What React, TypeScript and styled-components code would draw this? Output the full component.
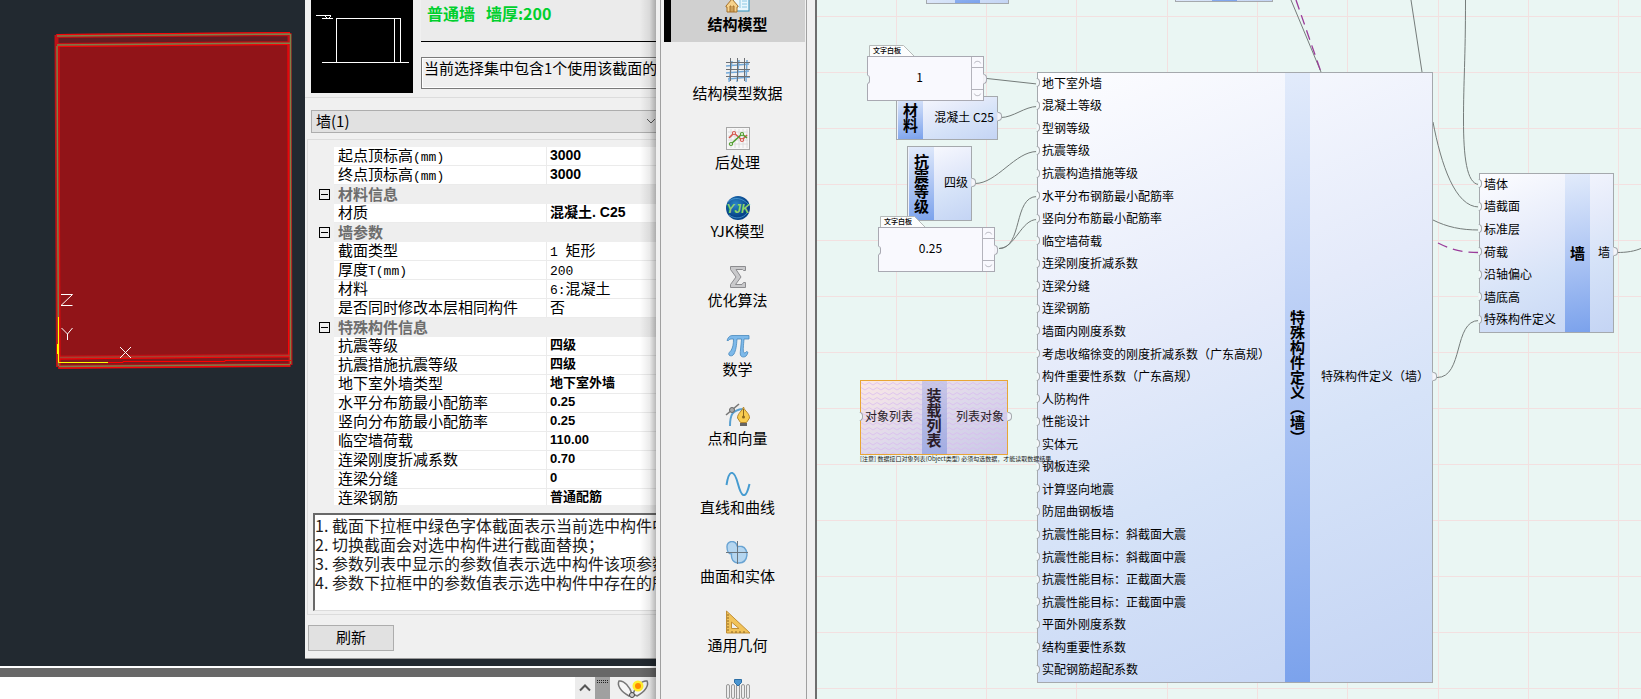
import React from "react";
import styled, { createGlobalStyle, css } from "styled-components";

const sans = '"Noto Sans CJK SC", "Noto Sans", sans-serif';
const latinBold = '"Liberation Sans", "Noto Sans CJK SC", sans-serif';

const GlobalStyle = createGlobalStyle`
  *, *::before, *::after { box-sizing: border-box; }
  html, body { margin: 0; padding: 0; }
  body { font-family: ${sans}; font-size: 15px; color: #000; background: #f0f0f0; overflow: hidden; }
  button, input, select, textarea { font: inherit; color: inherit; margin: 0; border-radius: 0; }
`;

const Page = styled.main`
  display: grid;
  grid-template-columns: minmax(0, 656fr) 161px minmax(0, 824fr);
  height: 100vh;
`;

/* ---------- CAD window ---------- */

const CadWindow = styled.section`
  position: relative;
  display: flex;
  flex-direction: column;
  min-height: 0;
  overflow: hidden;
  background: #222930;
  &::after {
    content: "";
    position: absolute;
    top: 0;
    right: 0;
    bottom: 0;
    width: 16px;
    pointer-events: none;
    background: linear-gradient(to right, rgba(0, 0, 0, 0), rgba(0, 0, 0, 0.08) 60%, rgba(0, 0, 0, 0.28));
  }
`;

const CadBody = styled.div`
  flex: 1;
  display: flex;
  min-height: 0;
`;

const Viewport = styled.div`
  flex: 1;
  min-width: 0;
  overflow: hidden;
  svg { display: block; }
`;

const Dialog = styled.aside`
  flex: none;
  width: 351px;
  align-self: flex-start;
  overflow: hidden;
  padding-bottom: 7px;
  background: #f0f0f0;
  border-bottom: 1px solid #9a9a9a;
  white-space: nowrap;
`;

const SectionInfo = styled.div`
  display: flex;
  gap: 8px;
  height: 98px;
  padding-left: 6px;
  border-bottom: 1px solid #dcdcdc;
`;

const Preview = styled.svg`
  flex: none;
  display: block;
  background: #000;
`;

const InfoColumn = styled.div`
  flex: 1;
  min-width: 0;
`;

const SectionName = styled.div`
  height: 42px;
  padding-left: 6px;
  border-bottom: 1px solid #000;
  background: #ebebeb;
  color: #00d02e;
  font-size: 16px;
  font-weight: 700;
  line-height: 26px;
`;

const SelectionNote = styled.input`
  display: block;
  width: 260px;
  height: 32px;
  margin-top: 15px;
  padding: 0 2px 12px;
  border: 1px solid #7a7a7a;
  outline: 1px solid #fff;
  outline-offset: -2px;
  background: #f0f0f0;
`;

const ComboBox = styled.div`
  position: relative;
  margin: 12px 0 6px 6px;
  height: 23px;
  border: 1px solid #adadad;
  border-right: 0;
  background: #e1e1e1;
  select {
    display: block;
    width: 100%;
    height: 21px;
    padding: 0 4px 2px;
    border: 0;
    appearance: none;
    background: transparent;
    line-height: 19px;
  }
  svg {
    position: absolute;
    top: 7px;
    right: 0;
    pointer-events: none;
  }
`;

const GroupBox = styled.div`
  margin-left: 2px;
  padding: 7px 0 3px;
  border: 1px solid #dcdcdc;
  border-right: 0;
`;

const GridClip = styled.div`
  height: 358px;
  overflow: hidden;
`;

const PropertyTable = styled.table`
  width: 100%;
  table-layout: fixed;
  border-collapse: separate;
  border-spacing: 0;
  line-height: 16px;
  th, td {
    height: 19px;
    padding: 0 0 2px;
    text-align: left;
    font-weight: 400;
  }
`;

const GutterCol = styled.col`
  width: 26px;
`;

const NameCol = styled.col`
  width: 213px;
`;

const GutterCell = styled.td`
  && { padding: 0; }
  line-height: 1px;
  vertical-align: middle;
`;

const NameCell = styled.th`
  && { padding-left: 4px; }
  background: #fff;
  border-right: 1px solid #ebebeb;
  border-bottom: 1px solid #ebebeb;
`;

const ValueCell = styled.td<{ $tone?: "large" | "bold" }>`
  && {
    padding-left: 3px;
    ${(p) => p.$tone && css`
      font-family: ${latinBold};
      font-weight: 700;
      font-size: ${p.$tone === "large" ? 14 : 13}px;
    `}
  }
  background: #fff;
  border-bottom: 1px solid #ebebeb;
`;

const CategoryCell = styled.th`
  && { padding-left: 4px; font-weight: 700; }
  background: #eee;
  color: #6d6d6d;
`;

const Mono = styled.span`
  font-family: "Liberation Mono", monospace;
  font-size: 13px;
  line-height: 1px;
`;

const CollapseButton = styled.button`
  position: relative;
  display: block;
  width: 11px;
  height: 11px;
  margin-left: 11px;
  padding: 0;
  border: 1px solid #000;
  background: #f0f0f0;
  &::after {
    content: "";
    position: absolute;
    inset: 4px 1px;
    background: #000;
  }
`;

const Notes = styled.textarea`
  display: block;
  width: calc(100% - 5px);
  height: 98px;
  margin: 8px 0 0 5px;
  padding: 1px 0 0;
  border: solid #696969;
  border-width: 2px 0 1px 2px;
  border-bottom-color: #dcdcdc;
  resize: none;
  overflow: hidden;
  white-space: pre;
  background: #fff;
  color: #1c1c1c;
  font-size: 16px;
  line-height: 19px;
`;

const RefreshButton = styled.button`
  display: block;
  width: 86px;
  height: 26px;
  margin: 10px 0 0 3px;
  padding: 0 0 2px;
  border: 1px solid #adadad;
  background: #e1e1e1;
  line-height: 22px;
`;

const CommandBar = styled.footer`
  flex: none;
  display: flex;
  justify-content: flex-end;
  height: 33px;
  border-top: 2px solid #fff;
  background: linear-gradient(#686868 0 9px, #fff 9px);
  padding-top: 9px;
`;

const HistoryButton = styled.button`
  width: 20px;
  padding: 0;
  border: 0;
  background: #ececec;
  line-height: 1px;
`;

const Grip = styled.div`
  width: 15px;
  background: #a0a0a0;
  svg { display: block; }
`;

const CommandTools = styled.div`
  width: 46px;
  background: #f0f0f0;
`;

/* ---------- Category sidebar ---------- */

const Sidebar = styled.nav`
  display: flex;
  min-height: 0;
  overflow: hidden;
  padding: 0 8px 0 4px;
  border-right: 2px solid #6e6e6e;
  background: #f0f0f0;
`;

const CategoryList = styled.ul`
  flex: 1;
  align-self: flex-start;
  min-height: 120vh;
  margin: -27px 0 0;
  padding: 0 1px 0 3px;
  border: solid #a0a0a0;
  border-width: 0 1px;
  list-style: none;
`;

const CategoryButton = styled.button<{ $active?: boolean }>`
  display: flex;
  flex-direction: column;
  align-items: center;
  width: 100%;
  height: 69px;
  padding: 16px 2px 0 8px;
  border: 0;
  background: #f0f0f0;
  line-height: 22px;
  ${(p) => p.$active && css`
    background: #d0d0d0;
    box-shadow: inset 7px 0 #000;
    font-weight: 700;
  `}
  svg { flex: none; display: block; }
`;

/* ---------- Node canvas ---------- */

const Canvas = styled.section`
  position: relative;
  min-width: 0;
  overflow: hidden;
  background: #eaf6f3;
  font-size: 12px;
  line-height: 16px;
  white-space: nowrap;
`;

const Layer = styled.svg`
  position: absolute;
  inset: 0;
  width: 100%;
  height: 100%;
`;

interface Box { $x: number; $y: number; $w: number; $h: number }

const NodeCard = styled.article<Box & { $warn?: boolean }>`
  position: absolute;
  left: ${(p) => p.$x}px;
  top: ${(p) => p.$y}px;
  width: ${(p) => p.$w}px;
  height: ${(p) => p.$h}px;
  display: flex;
  border: 1px solid #a5a9ad;
  background: linear-gradient(158deg, #fdfdff, #e4eafa 42%, #d6e3f8 62%, #c4d4f4);
  ${(p) => p.$warn && css`
    border-color: #e8a535;
    background: linear-gradient(150deg, #fbe8e6, #ddd8ea 50%, #c9c8e6);
    color: #2a1c28;
  `}
`;

const Strip = styled.h3<{ $warn?: boolean }>`
  position: relative;
  flex: none;
  display: flex;
  align-items: center;
  justify-content: center;
  width: 25px;
  margin: 0;
  writing-mode: vertical-rl;
  font-size: 15px;
  line-height: 25px;
  font-weight: 700;
  background: ${(p) => (p.$warn ? "linear-gradient(rgba(190,190,230,.7), rgba(150,165,225,.8))" : "linear-gradient(170deg, #e2ebfb, #b0c7f4 50%, #7ba2ec)")};
  &:first-child {
    width: 26px;
    border-left: 1px solid #eef2fb;
  }
`;

const PortColumn = styled.div<{ $grow?: boolean }>`
  position: relative;
  display: flex;
  flex-direction: column;
  min-width: 0;
  ${(p) => p.$grow && "flex: 1;"}
`;

const OutputSlot = styled(PortColumn)<{ $w: number }>`
  flex: none;
  width: ${(p) => p.$w}px;
`;

const InPort = styled.div`
  position: relative;
  flex: 1;
  display: flex;
  align-items: center;
  padding: 0 0 3px 4px;
  &::before {
    content: "";
    position: absolute;
    left: -2px;
    width: 4px;
    height: 9px;
    border: 1px solid #a5a9ad;
    border-left-color: #eaf6f3;
    border-radius: 0 4px 4px 0;
    background: #f4f8fa;
  }
`;

const OutPort = styled.div`
  position: relative;
  flex: 1;
  display: flex;
  align-items: center;
  justify-content: flex-end;
  padding: 0 3px 3px 0;
  &::after {
    content: "";
    position: absolute;
    right: -5px;
    width: 5px;
    height: 9px;
    border: 1px solid #a5a9ad;
    border-left-color: #e8e8ee;
    border-radius: 0 4px 4px 0;
    background: #f4f5fa;
  }
`;

const BoardWrap = styled.label<{ $x: number; $y: number }>`
  position: absolute;
  left: ${(p) => p.$x}px;
  top: ${(p) => p.$y}px;
  width: 117px;
`;

const BoardTab = styled.span`
  position: relative;
  display: block;
  width: 46px;
  height: 11px;
  margin-left: 2px;
  padding-left: 4px;
  font-size: 7px;
  line-height: 11px;
  svg { position: absolute; left: 0; top: 0; }
  b { position: relative; font-weight: 500; }
`;

const BoardBody = styled.span`
  position: relative;
  display: flex;
  height: 45px;
  border: 1px solid #a9a9b2;
  background: #f9f9fe;
  &::before {
    content: "";
    position: absolute;
    left: -1px;
    top: 18px;
    width: 3px;
    height: 9px;
    border: 1px solid #a9a9b2;
    border-left-color: #eaf6f3;
    border-radius: 0 3px 3px 0;
    background: #eaf6f3;
  }
  &::after {
    content: "";
    position: absolute;
    right: -4px;
    top: 17px;
    width: 4px;
    height: 10px;
    border: 1px solid #a9a9b2;
    border-left-color: #f0f0f4;
    border-radius: 0 4px 4px 0;
    background: #f4f5fa;
  }
  input {
    flex: 1;
    min-width: 0;
    padding: 0 0 4px;
    border: 0;
    background: transparent;
    text-align: center;
  }
`;

const Scroller = styled.span`
  display: flex;
  flex-direction: column;
  justify-content: space-between;
  width: 12px;
  border-left: 1px solid #b4b4bc;
  svg { display: block; border: solid #b4b4bc; border-width: 0 0 1px; }
  svg:last-child { border-width: 1px 0 0; }
`;

const Remark = styled.p`
  position: absolute;
  left: 43px;
  top: 454px;
  margin: 0;
  font-size: 6px;
  line-height: 9px;
  color: #222;
`;

/* ---------- Data ---------- */

type Row = { category: string } | { name: string; value: string; tone?: "large" | "bold" };

const rows: Row[] = [
  { name: "起点顶标高(mm)", value: "3000", tone: "large" },
  { name: "终点顶标高(mm)", value: "3000", tone: "large" },
  { category: "材料信息" },
  { name: "材质", value: "混凝土. C25", tone: "large" },
  { category: "墙参数" },
  { name: "截面类型", value: "1 矩形" },
  { name: "厚度T(mm)", value: "200" },
  { name: "材料", value: "6:混凝土" },
  { name: "是否同时修改本层相同构件", value: "否" },
  { category: "特殊构件信息" },
  { name: "抗震等级", value: "四级", tone: "bold" },
  { name: "抗震措施抗震等级", value: "四级", tone: "bold" },
  { name: "地下室外墙类型", value: "地下室外墙", tone: "bold" },
  { name: "水平分布筋最小配筋率", value: "0.25", tone: "bold" },
  { name: "竖向分布筋最小配筋率", value: "0.25", tone: "bold" },
  { name: "临空墙荷载", value: "110.00", tone: "bold" },
  { name: "连梁刚度折减系数", value: "0.70", tone: "bold" },
  { name: "连梁分缝", value: "0", tone: "bold" },
  { name: "连梁钢筋", value: "普通配筋", tone: "bold" },
];

const notes = [
  "1. 截面下拉框中绿色字体截面表示当前选中构件中",
  "2. 切换截面会对选中构件进行截面替换；",
  "3. 参数列表中显示的参数值表示选中构件该项参数",
  "4. 参数下拉框中的参数值表示选中构件中存在的所",
].join("\n");

const specialInputs = [
  "地下室外墙", "混凝土等级", "型钢等级", "抗震等级", "抗震构造措施等级",
  "水平分布钢筋最小配筋率", "竖向分布筋最小配筋率", "临空墙荷载", "连梁刚度折减系数",
  "连梁分缝", "连梁钢筋", "墙面内刚度系数", "考虑收缩徐变的刚度折减系数（广东高规）",
  "构件重要性系数（广东高规）", "人防构件", "性能设计", "实体元", "钢板连梁",
  "计算竖向地震", "防屈曲钢板墙", "抗震性能目标：斜截面大震", "抗震性能目标：斜截面中震",
  "抗震性能目标：正截面大震", "抗震性能目标：正截面中震", "平面外刚度系数",
  "结构重要性系数", "实配钢筋超配系数",
];

const wallInputs = ["墙体", "墙截面", "标准层", "荷载", "沿轴偏心", "墙底高", "特殊构件定义"];

/* ---------- Icons ---------- */

const Icon = ({ children }: { children: React.ReactNode }) => (
  <svg width="26" height="24" viewBox="0 0 26 24" aria-hidden="true">{children}</svg>
);

const HouseIcon = () => (
  <Icon>
    <rect x="8" y="3" width="16" height="19" fill="#e9f7fd" stroke="#2d8fbd" />
    <path d="M10 10h5v9M17 12h5M17 15h5M17 18h5" stroke="#8cc8e4" fill="none" />
    <path d="M1 17 7 10l6 7v1h-1v5H2v-5H1z" fill="#f6d28b" stroke="#a5702a" />
    <path d="M5 23v-6h1v6M8 23v-6h1v6" stroke="#a5702a" fill="none" />
  </Icon>
);

const MeshIcon = () => (
  <Icon>
    <path d="M7 3 4 24M14 2l-2 22M22 2l-1 22M1 8l23-2M1 15l23-2M3 21l22-2" stroke="#74a9d8" strokeWidth="1.500" fill="none" />
    <path d="M5.500 0v23M12.500 0v23M19.500 0v23M1 4.500h24M1 11.500h24M1 18.500h24" stroke="#6b6f74" fill="none" />
  </Icon>
);

const ChartIcon = () => (
  <Icon>
    <rect x="1.500" y=".5" width="23" height="22" fill="#f7f7f7" stroke="#a6a6a6" />
    <path d="M6 2v19M10 2v19M14 2v19M18 2v19M22 2v19M3 5h20M3 9h20M3 13h20M3 17h20" stroke="#dcdcdc" />
    <path d="M4 11 9 6l8 7 5-5" stroke="#d4574e" strokeWidth="1.600" fill="none" />
    <path d="m6 17 11-10 5 4" stroke="#4f9c2d" strokeWidth="1.600" fill="none" />
    <g fill="#fff" strokeWidth="1.200"><circle cx="9" cy="6" r="1.500" stroke="#d4574e" /><circle cx="17" cy="13" r="1.500" stroke="#d4574e" /><circle cx="6" cy="17" r="1.500" stroke="#4f9c2d" /><circle cx="17" cy="7" r="1.500" stroke="#4f9c2d" /></g>
  </Icon>
);

const YjkIcon = () => (
  <Icon>
    <defs><radialGradient id="globe" cx=".4" cy=".35"><stop offset="0" stopColor="#2b86c8" /><stop offset="1" stopColor="#07448a" /></radialGradient></defs>
    <circle cx="13" cy="12" r="12" fill="url(#globe)" />
    <path d="M3 6c6-6 15-4 21 3M4 19c7 5 14 3 18-2" stroke="#5fb0e2" fill="none" opacity=".6" />
    <text x="13" y="17" textAnchor="middle" fontFamily="Liberation Sans" fontStyle="italic" fontWeight="700" fontSize="12" fill="#8fd36a">YJK</text>
  </Icon>
);

const SigmaIcon = () => (
  <Icon>
    <path d="M5.500 1.500h15v4h-2l-1-1H11l5 7.500-5.500 7.500H17l1.500-2h2v5h-15v-3L11 12 5.500 4.500z" fill="#c9c9cb" stroke="#8c8c8f" />
  </Icon>
);

const PiIcon = () => (
  <Icon>
    <path d="M2 6.500C3.500 2.500 5 1.500 8 1.500h16v3.500h-5c-.5 6-1 11-.5 13 .5 1.500 2 1 3-.5l1.500.8c-1 3.500-2.500 4.700-4.500 4.700-3.500 0-3.500-3-3-7l1-11h-4.500c-.5 7-1 11-3 15-1 2-4 2.500-5 1-1-2 1-3 2-4.500 2-3 2.500-7 2.500-11.500-3 0-4 0-5 1.500z" fill="#7db9ea" stroke="#4688bd" strokeWidth=".8" />
  </Icon>
);

const PenIcon = () => (
  <Icon>
    <path d="M5 23c0-11 2-16 13-17" stroke="#5aa0d0" strokeWidth="2" fill="none" />
    <path d="m1 12 13-11" stroke="#777" strokeWidth="1.600" />
    <circle cx="7" cy="7" r="2.500" fill="#aaa" stroke="#666" />
    <path d="M18.500 4c1 4 6 6 6 11l-3 4.500h-6l-3-4.500c0-5 5-7 6-11z" fill="#f8cc50" stroke="#b5862b" />
    <path d="M18.500 6v8" stroke="#8b671f" /><circle cx="18.500" cy="14" r="1.500" fill="#8b671f" />
    <path d="M15 20h7v3h-7z" fill="#646464" />
  </Icon>
);

const SineIcon = () => (
  <Icon><path d="M1.500 13C4-3 9-3 13 12s8 15 11.500 0" stroke="#459bd0" strokeWidth="2" fill="none" /></Icon>
);

const SolidIcon = () => (
  <Icon>
    <path d="M2 6a5 5 0 0 1 10-1c1 1 3 0 5 .5 7 2 7 16-3 16.500-6 0-8-4-7.500-9C4 13 2 11 2 6z" fill="#b5d6f0" stroke="#69a3d2" strokeWidth="1.400" />
    <path d="M12.500 0v23M1 11.500h22" stroke="#6a7680" />
  </Icon>
);

const TriangleIcon = () => (
  <Icon>
    <path d="M1.500 1v22H25zM6.500 12v6.500H14z" fill="#f1c35a" stroke="#c28f35" fillRule="evenodd" />
    <path d="M2 5h2M2 8h2M2 11h2M2 14h2M2 17h2M2 20h2M7 23v-2M11 23v-2M15 23v-2M19 23v-2" stroke="#8e6925" />
  </Icon>
);

const SliceIcon = () => (
  <Icon>
    <g fill="#ececec" stroke="#9a9a9a"><rect x="1.500" y="5.500" width="3" height="14" rx="1.500" /><rect x="6.500" y="5.500" width="3" height="14" rx="1.500" /><rect x="16.500" y="5.500" width="3" height="14" rx="1.500" /><rect x="21.500" y="5.500" width="3" height="14" rx="1.500" /></g>
    <rect x="11.500" y="5" width="3" height="15" fill="#ececec" stroke="#9a9a9a" />
    <path d="M9.500 .5h7v3L13 7 9.500 3.500z" fill="#4a95d0" stroke="#2c6fa6" />
  </Icon>
);

const categories = [
  { label: "结构模型", icon: <HouseIcon /> },
  { label: "结构模型数据", icon: <MeshIcon /> },
  { label: "后处理", icon: <ChartIcon /> },
  { label: "YJK模型", icon: <YjkIcon /> },
  { label: "优化算法", icon: <SigmaIcon /> },
  { label: "数学", icon: <PiIcon /> },
  { label: "点和向量", icon: <PenIcon /> },
  { label: "直线和曲线", icon: <SineIcon /> },
  { label: "曲面和实体", icon: <SolidIcon /> },
  { label: "通用几何", icon: <TriangleIcon /> },
  { label: "", icon: <SliceIcon /> },
];

/* ---------- Parts ---------- */

/* Latin runs use a narrower monospaced face than the Chinese text round them. */
const Mixed = ({ text }: { text: string }) => (
  <>
    {text.split(/([\x20-\x7e]+)/).map((run, i) =>
      i % 2 ? <Mono key={i}>{run}</Mono> : run
    )}
  </>
);

const WallView = () => (
  <svg width="305" height="390" viewBox="0 0 305 390" fill="none" role="img" aria-label="3D">
    <path d="M57 36 290 34l1 331-232 2z" fill="#911418" />
    <path d="M57 36 290 33v10L57 46z" fill="#621c22" />
    <path d="M60 360 290 357v8L60 367z" fill="#7c1a1e" />
    <g stroke="#c01016" strokeWidth="4">
      <path d="M56 36 290 34M57 45 290 43M56.500 35l1.500 332M289.500 33l1 332M58 367l232-2M60 357.500 290 355.500" />
    </g>
    <g stroke="#fb0408" strokeWidth="1">
      <path d="M57 34.500 290 32.500M58 46.500 288 44.500M59 46l1 320M288 44l.5 312M59 368l232-2M60 359 290 356.500" />
    </g>
    <g stroke="#7d8048" strokeWidth="1.500">
      <path d="M57 36 290 34M57 45 290 43M57 46l1.500 320M290.500 34v330M59 366.500l231-2" />
    </g>
    <path d="M60 357.500 290 355.500" stroke="#a54230" strokeWidth="1.500" />
    <path d="M108 362.500h15v-1h102v-1h66" stroke="#f00" />
    <path d="M58.500 317v45.500H108" stroke="#ff0" />
    <path d="M57.500 344v10" stroke="#ff0" />
    <path d="M61 294.500h11.500L61 305.500h11.500M61.500 328l6 6 5-6M67.500 334v6M120 347l11 11M131 347l-11 11" stroke="#fff" />
  </svg>
);

const PropertyDialog = () => (
  <Dialog>
    <SectionInfo>
      <Preview width="102" height="93" viewBox="0 0 102 93" fill="none" stroke="#fff">
        <path d="M5 15.500h15M11 18.500h11M14 16l3 3 3-3M25 18.500h65M25.500 18v44M83.500 18v44M89.500 18v44M11 62.500h87" />
      </Preview>
      <InfoColumn>
        <SectionName>普通墙&nbsp;&nbsp; 墙厚:200</SectionName>
        <SelectionNote readOnly aria-label="选择集" value="当前选择集中包含1个使用该截面的" />
      </InfoColumn>
    </SectionInfo>
    <ComboBox>
      <select aria-label="构件"><option>墙(1)</option></select>
      <svg width="10" height="8" viewBox="0 0 10 8" fill="none" stroke="#555"><path d="m1 1 4 4 4-4" /></svg>
    </ComboBox>
    <GroupBox>
      <GridClip>
        <PropertyTable>
          <colgroup><GutterCol /><NameCol /><col /></colgroup>
          <tbody>
            {rows.map((row, i) =>
              "category" in row ? (
                <tr key={i}>
                  <GutterCell><CollapseButton aria-label={row.category} /></GutterCell>
                  <CategoryCell colSpan={2}>{row.category}</CategoryCell>
                </tr>
              ) : (
                <tr key={i}>
                  <GutterCell />
                  <NameCell scope="row"><Mixed text={row.name} /></NameCell>
                  <ValueCell $tone={row.tone}>{row.tone ? row.value : <Mixed text={row.value} />}</ValueCell>
                </tr>
              )
            )}
          </tbody>
        </PropertyTable>
      </GridClip>
      <Notes readOnly aria-label="说明" value={notes} />
    </GroupBox>
    <RefreshButton>刷新</RefreshButton>
  </Dialog>
);

const Board = ({ x, y, value }: { x: number; y: number; value: string }) => (
  <BoardWrap $x={x} $y={y}>
    <BoardTab>
      <svg width="46" height="12" viewBox="0 0 46 12"><path d="M.5 12V.5h34L45 11" fill="#fcfdfd" stroke="#b5bab9" /></svg>
      <b>文字白板</b>
    </BoardTab>
    <BoardBody>
      <input defaultValue={value} />
      <Scroller>
        <svg width="11" height="11" viewBox="0 0 11 11" fill="none" stroke="#aaaab4"><path d="M2 7c1-3 6-3 7 0" /></svg>
        <svg width="11" height="11" viewBox="0 0 11 11" fill="none" stroke="#aaaab4"><path d="M2 4c1 3 6 3 7 0" /></svg>
      </Scroller>
    </BoardBody>
  </BoardWrap>
);

const Wires = () => (
  <Layer aria-hidden="true">
    <defs>
      <pattern id="grid" width="271" height="56" patternUnits="userSpaceOnUse" patternTransform="translate(-12 -40)">
        <path d="M0 .5H271M91.500 0V56M181.500 0V56M.5 0V56" stroke="#f3e0e0" fill="none" />
      </pattern>
    </defs>
    <rect width="100%" height="100%" fill="url(#grid)" />
    <g transform="translate(-817 0)" fill="none" stroke="#757c7a">
      <path d="M987 78.500 1037 84" />
      <path d="M1001 117.500c12 0 24-11 36-11" />
      <path d="M975 183.500c22 0 40-32 62-32" />
      <path d="M999 248.500c24 0 14-52 38-52" />
      <path d="M999 248.500c16 0 22-29 38-29" />
      <path d="M1291 0 1321 72" />
      <path d="M1296 0 1321 72" stroke="#9a3c9a" strokeWidth="1.300" strokeDasharray="10 6" />
      <path d="M1411 0 1422 72" />
      <path d="M1433 122c8 42 22 85 46 85" />
      <path d="M1465.500 0c0 60-2 80-2 120 0 36 3 64 15.500 64.500" />
      <path d="M1433 220c14 7 28 10 46 10" />
      <path d="M1438 243c14 7 25 9.500 41 9.500" stroke="#9a3c9a" strokeWidth="1.300" strokeDasharray="10 6" />
      <path d="M1437 377.500c27 0 16-57 42-57" />
      <path d="M1617 252.500c9 0 18-1 26-5" />
    </g>
  </Layer>
);

const Waves = () => (
  <Layer aria-hidden="true">
    <defs>
      <pattern id="waves" width="8" height="5" patternUnits="userSpaceOnUse">
        <path d="M0 1.500 4 4l4-2.500" stroke="#d9b8f0" strokeWidth=".7" fill="none" />
      </pattern>
    </defs>
    <rect width="100%" height="100%" fill="url(#waves)" />
  </Layer>
);

export default function App() {
  return (
    <>
      <GlobalStyle />
      <Page>
        <CadWindow>
          <CadBody>
            <Viewport><WallView /></Viewport>
            <PropertyDialog />
          </CadBody>
          <CommandBar>
            <HistoryButton aria-label="展开">
              <svg width="12" height="8" viewBox="0 0 12 8" fill="none" stroke="#555" strokeWidth="2"><path d="m1 6.500 5-5 5 5" /></svg>
            </HistoryButton>
            <Grip>
              <svg width="15" height="8" viewBox="0 0 15 8"><path d="M2 3.500h11M2 5.500h11" stroke="#222" strokeDasharray="1 1" /></svg>
            </Grip>
            <CommandTools>
              <svg width="46" height="22" viewBox="0 0 46 22" fill="none">
                <path d="M9 4c-2 4 1 10 10 15l3-2C20 10 14 3 9 4z" fill="#f6f6f6" stroke="#777" strokeWidth="1.500" />
                <path d="M37 4c2 4-1 10-10 15l-4-2C25 10 32 3 37 4z" fill="#f6f6f6" stroke="#777" strokeWidth="1.500" />
                <circle cx="22" cy="18" r="2.500" fill="#ccc" stroke="#444" />
                <circle cx="28" cy="9" r="5.500" fill="#ffee2e" /><circle cx="28" cy="9" r="3" fill="#ff8a00" />
              </svg>
            </CommandTools>
          </CommandBar>
        </CadWindow>

        <Sidebar>
          <CategoryList>
            {categories.map((c, i) => (
              <li key={i}><CategoryButton $active={i === 0}>{c.icon}{c.label}</CategoryButton></li>
            ))}
          </CategoryList>
        </Sidebar>

        <Canvas>
          <Wires />
          <NodeCard $x={109} $y={-40} $w={83} $h={44}><PortColumn $grow /><Strip /><PortColumn $grow /></NodeCard>
          <NodeCard $x={358} $y={-42} $w={98} $h={44}><PortColumn $grow /><Strip /><PortColumn $grow /></NodeCard>

          <NodeCard $x={79} $y={96} $w={102} $h={44}>
            <Strip>材料</Strip>
            <PortColumn $grow><OutPort>混凝土 C25</OutPort></PortColumn>
          </NodeCard>
          <Board x={50} y={45} value="1" />

          <NodeCard $x={90} $y={146} $w={65} $h={75}>
            <Strip>抗震等级</Strip>
            <PortColumn $grow><OutPort>四级</OutPort></PortColumn>
          </NodeCard>
          <Board x={61} y={216} value="0.25" />

          <NodeCard $x={220} $y={72} $w={396} $h={611}>
            <PortColumn $grow>{specialInputs.map((t) => <InPort key={t}>{t}</InPort>)}</PortColumn>
            <Strip>特殊构件定义（墙）</Strip>
            <OutputSlot $w={122}><OutPort>特殊构件定义（墙）</OutPort></OutputSlot>
          </NodeCard>

          <NodeCard $x={43} $y={380} $w={148} $h={75} $warn>
            <Waves />
            <PortColumn $grow><InPort>对象列表</InPort></PortColumn>
            <Strip $warn>装载列表</Strip>
            <PortColumn $grow><OutPort>列表对象</OutPort></PortColumn>
          </NodeCard>
          <Remark>[注意] 数据接口对象列表(Object类型) 必须勾选数据，才能读取数据结果.</Remark>

          <NodeCard $x={662} $y={173} $w={135} $h={160}>
            <PortColumn $grow>{wallInputs.map((t) => <InPort key={t}>{t}</InPort>)}</PortColumn>
            <Strip>墙</Strip>
            <OutputSlot $w={23}><OutPort>墙</OutPort></OutputSlot>
          </NodeCard>
        </Canvas>
      </Page>
    </>
  );
}
